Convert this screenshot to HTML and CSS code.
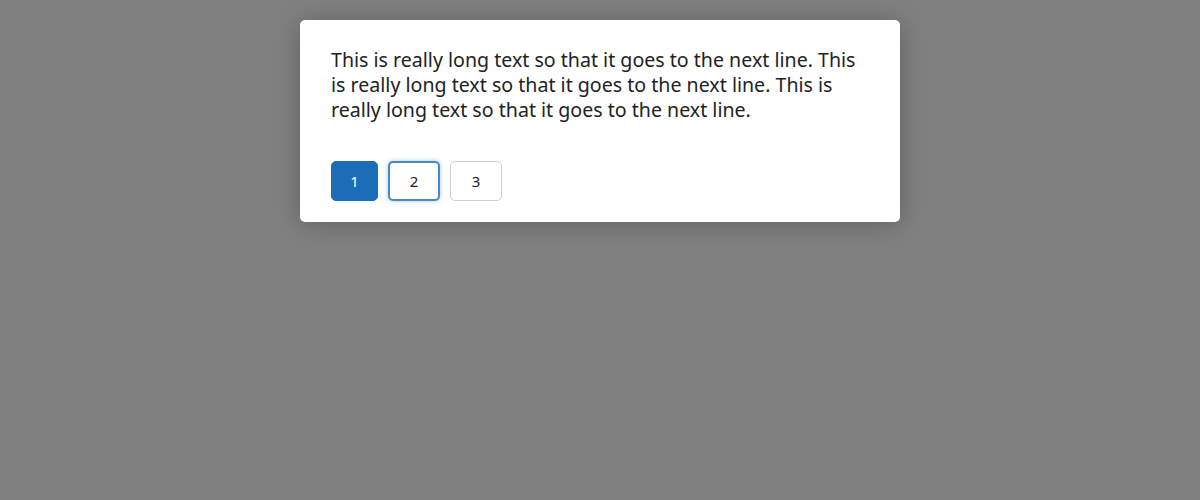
FILE: index.html
```html
<!DOCTYPE html>
<html>
<head>
<meta charset="utf-8">
<link rel="stylesheet" href="styles.css">
</head>
<body>
<div class="overlay">
  <div class="dialog">
    <p class="message">This is really long text so that it goes to the next line. This is really long text so that it goes to the next line. This is really long text so that it goes to the next line.</p>
    <div class="actions">
      <button class="btn btn-primary">1</button>
      <button class="btn btn-focus">2</button>
      <button class="btn">3</button>
    </div>
  </div>
</div>
</body>
</html>
```
FILE: styles.css
```css
html, body {
  margin: 0;
  padding: 0;
  height: 100%;
}
body {
  background: #808080;
  font-family: "Noto Sans", "Open Sans", sans-serif;
}
.overlay {
  display: flex;
  justify-content: center;
  padding-top: 20px;
}
.dialog {
  width: 600px;
  box-sizing: border-box;
  background: #fff;
  border-radius: 5px;
  padding: 27px 30px 21px 31px;
  box-shadow: 0 2px 24px rgba(0,0,0,0.25);
}
.message {
  margin: 0 0 39px 0;
  font-size: 19.6px;
  line-height: 25px;
  color: #222;
}
.actions {
  display: flex;
  gap: 10px;
}
.btn {
  font-family: inherit;
  height: 40px;
  min-width: 52px;
  padding: 0 14px;
  border: 1px solid #d0d0d0;
  border-radius: 5px;
  background: #fff;
  color: #222;
  font-size: 15px;
}
.btn-primary {
  min-width: 47px;
  background: #1a6db6;
  border-color: #1a6db6;
  color: #fff;
}
.btn-focus {
  border: 2px solid #4a8ac4;
  box-shadow: 0 0 4px rgba(74,138,196,0.5);
}
```
